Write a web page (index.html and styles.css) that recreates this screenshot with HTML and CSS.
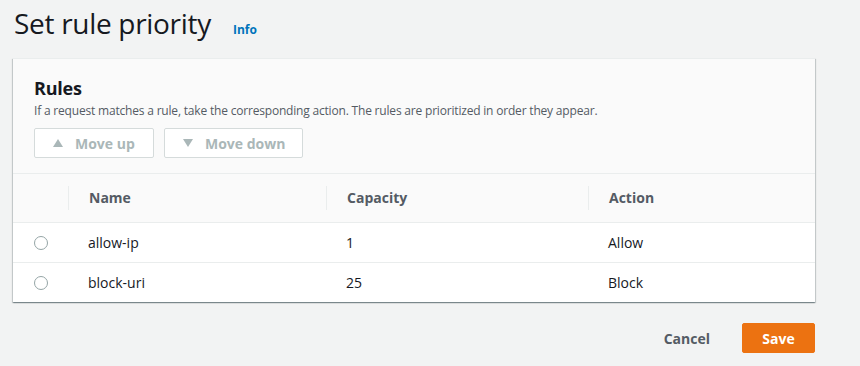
FILE: index.html
```html
<!DOCTYPE html>
<html lang="en">
<head>
  <meta charset="UTF-8">
  <title>Set rule priority</title>
  <link rel="stylesheet" href="styles.css">
</head>
<body>
  <div class="page">
    <div class="page-header">
      <h1>Set rule priority</h1>
      <a href="#" class="info">Info</a>
    </div>

    <div class="card">
      <div class="card-head">
        <h2>Rules</h2>
        <p>If a request matches a rule, take the corresponding action. The rules are prioritized in order they appear.</p>
        <div class="actions">
          <button class="btn up" disabled>
            <svg class="tri" width="10" height="8" viewBox="0 0 10 8"><polygon points="5,0 10,8 0,8" fill="currentColor"/></svg>
            Move up
          </button>
          <button class="btn down" disabled>
            <svg class="tri" width="10" height="8" viewBox="0 0 10 8"><polygon points="0,0 10,0 5,8" fill="currentColor"/></svg>
            Move down
          </button>
        </div>
      </div>

      <table class="rules">
        <colgroup>
          <col class="c-sel">
          <col class="c-name">
          <col class="c-cap">
          <col>
        </colgroup>
        <thead>
          <tr>
            <th></th>
            <th><span>Name</span></th>
            <th><span>Capacity</span></th>
            <th><span>Action</span></th>
          </tr>
        </thead>
        <tbody>
          <tr>
            <td class="sel"><span class="radio"></span></td>
            <td>allow-ip</td>
            <td>1</td>
            <td>Allow</td>
          </tr>
          <tr>
            <td class="sel"><span class="radio"></span></td>
            <td>block-uri</td>
            <td>25</td>
            <td>Block</td>
          </tr>
        </tbody>
      </table>
    </div>

    <div class="footer">
      <a href="#" class="cancel">Cancel</a>
      <button class="save">Save</button>
    </div>
  </div>
</body>
</html>
```

FILE: styles.css
```css
body {
  margin: 0;
  background: #f2f3f3;
  font-family: "Open Sans", "Liberation Sans", sans-serif;
  color: #16191f;
}
.page {
  padding: 0 45px 0 14px;
}
.page-header {
  display: flex;
  align-items: baseline;
  height: 58px;
  padding-top: 4px;
  box-sizing: border-box;
}
.page-header h1 {
  margin: 0;
  font-size: 28px;
  font-weight: 400;
  letter-spacing: -0.3px;
  color: #16191f;
}
.info {
  margin-left: 22px;
  font-size: 12px;
  font-weight: 700;
  color: #0073bb;
  text-decoration: none;
}
.card {
  background: #fff;
  margin-left: -1px;
  border-top: 1px solid #eaeded;
  box-shadow: 0 1px 1px 0 rgba(0, 28, 36, 0.3), 1px 1px 1px 0 rgba(0, 28, 36, 0.15), -1px 1px 1px 0 rgba(0, 28, 36, 0.15);
}
.card-head {
  background: #fafafa;
  padding: 17px 20px 15px 21px;
  border-bottom: 1px solid #eaeded;
}
.card-head h2 {
  margin: 0;
  font-size: 18px;
  font-weight: 700;
  line-height: 24px;
  letter-spacing: -0.2px;
}
.card-head p {
  margin: 2px 0 0;
  font-size: 12px;
  line-height: 18px;
  letter-spacing: -0.19px;
  color: #545b64;
}
.actions {
  display: flex;
  gap: 10px;
  margin-top: 8px;
}
.btn {
  font-family: inherit;
  font-size: 14px;
  font-weight: 700;
  color: #aab7b8;
  background: #fff;
  border: 1px solid #d5dbdb;
  border-radius: 2px;
  height: 30px;
  padding: 0 0 0 18px;
  display: flex;
  align-items: center;
}
.btn.up { width: 120px; }
.btn.down { width: 139px; }
.tri {
  margin-right: 12px;
}
.rules {
  width: 100%;
  table-layout: fixed;
  border-collapse: collapse;
  font-size: 14px;
}
.c-sel { width: 55px; }
.c-name { width: 258px; }
.c-cap { width: 262px; }
.rules th {
  background: #fafafa;
  height: 48px;
  text-align: left;
  font-weight: 700;
  color: #545b64;
  padding: 0;
  border-bottom: 1px solid #eaeded;
}
.rules th span {
  display: block;
  border-left: 1px solid #eaeded;
  padding-left: 20px;
  line-height: 24px;
}
.rules td {
  height: 39px;
  padding: 0 0 0 20px;
  border-bottom: 1px solid #eaeded;
}
.rules tbody tr:last-child td {
  border-bottom: none;
}
.rules td.sel {
  padding: 0 0 0 21px;
}
.radio {
  display: block;
  width: 14px;
  height: 14px;
  border: 1px solid #95a5a6;
  border-radius: 50%;
  box-sizing: border-box;
}
.footer {
  display: flex;
  justify-content: flex-end;
  align-items: center;
  gap: 32px;
  margin-top: 21px;
}
.cancel {
  font-size: 14px;
  font-weight: 700;
  color: #545b64;
  text-decoration: none;
}
.save {
  font-family: inherit;
  font-size: 14px;
  font-weight: 700;
  color: #fff;
  background: #ec7211;
  border: 1px solid #ec7211;
  border-radius: 2px;
  height: 30px;
  width: 73px;
}
```
